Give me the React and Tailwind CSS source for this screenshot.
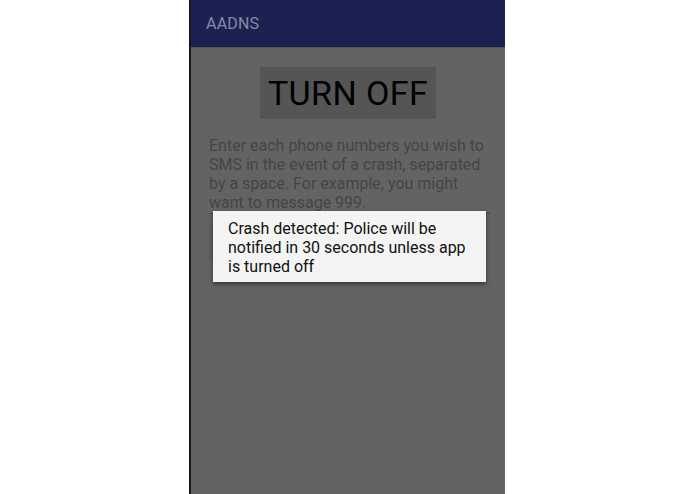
import React from 'react';

// Crash alert screen: app bar, turn-off button, number field and the toast on top
const App = () => {
  return (
    <div
      className="flex w-[695px] h-[494px] bg-white overflow-hidden"
      style={{ fontFamily: 'Roboto, "Liberation Sans", sans-serif' }}
    >
      {/* Space left of the device */}
      <div className="w-[189px] shrink-0" />
      <div className="w-[2px] shrink-0 bg-[#161616]" />

      {/* Device screen */}
      <div className="relative w-[314px] shrink-0 flex flex-col bg-[#636363]">
        {/* App bar */}
        <header className="h-[48px] shrink-0 flex items-center px-[15px] bg-[#1b2151] border-b border-[#555555]">
          <span className="text-[16px] text-[#868aa6] tracking-[0.2px]">AADNS</span>
        </header>

        {/* Main content */}
        <main className="flex flex-col px-[18px] pt-[19px]">
          <div className="flex justify-center">
            <button className="w-[176px] h-[52px] bg-[#555555] text-black text-[34px] leading-none tracking-[0.4px]">
              TURN OFF
            </button>
          </div>

          <p className="mt-[17px] text-[16px] leading-[19px] text-[#454545]">
            Enter each phone numbers you wish to SMS in the event of a crash, separated by a space. For example, you might want to message 999.
          </p>
          <div className="mt-[1px] -mr-[3px] h-px bg-[#7a3034]" />

          <div className="mt-[11px] mr-[10px] h-[35px] bg-[#5d5d5d] border-l border-[#585858]" />
        </main>

        {/* Toast */}
        <div className="absolute left-[22px] top-[211px] w-[273px] h-[71px] bg-[#f4f4f4] px-[15px] pt-[8px] shadow-[0_2px_4px_rgba(0,0,0,0.45)]">
          <p className="text-[16px] leading-[19px] text-[#111111]">
            Crash detected: Police will be notified in 30 seconds unless app is turned off
          </p>
        </div>
      </div>
    </div>
  );
};

export default App;
